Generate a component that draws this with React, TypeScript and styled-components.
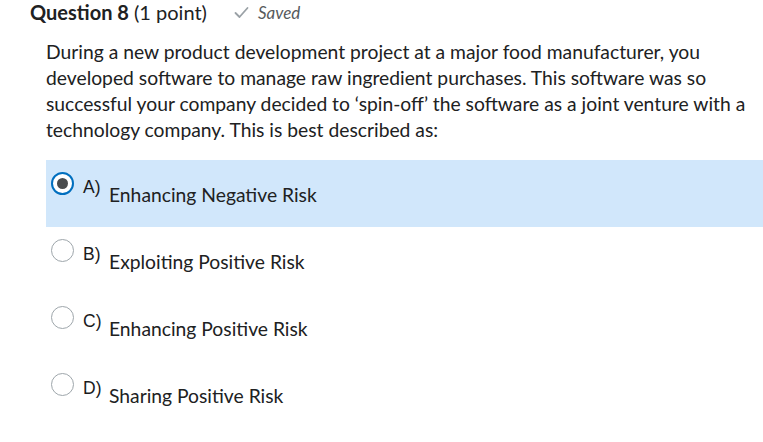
import styled, { createGlobalStyle } from "styled-components";

const GlobalStyle = createGlobalStyle`
  html, body {
    margin: 0;
    padding: 0;
    background: #fff;
  }
  body {
    font-family: Lato, "Open Sans", sans-serif;
    color: #202122;
  }
`;

const Page = styled.div`
  width: 763px;
  height: 442px;
  overflow: hidden;
`;

const Header = styled.div`
  display: flex;
  align-items: center;
  padding: 0 0 0 30px;
  height: 24px;
`;

const Title = styled.h2`
  margin: 0;
  font-size: 20px;
  font-weight: 400;
  color: #202122;
`;

const Strong = styled.span`
  font-weight: 700;
`;

const Saved = styled.span`
  display: flex;
  align-items: center;
  gap: 9px;
  margin-left: 27px;
  font-size: 17px;
  font-style: italic;
  color: #565a5c;
`;

const Prompt = styled.p`
  margin: 15px 0 0 46px;
  width: 714px;
  font-size: 19.3px;
  line-height: 26px;
  color: #202122;
`;

const Options = styled.div`
  margin-top: 17px;
  margin-left: 46px;
  display: flex;
  flex-direction: column;
`;

const Option = styled.label<{ $selected?: boolean }>`
  display: flex;
  align-items: flex-start;
  height: 67px;
  padding: 12px 0 0 5px;
  box-sizing: border-box;
  background: ${p => (p.$selected ? "#d1e7fb" : "transparent")};
  cursor: pointer;
`;

const Radio = styled.span<{ $checked?: boolean }>`
  width: 23px;
  height: 23px;
  box-sizing: border-box;
  border-radius: 50%;
  background: #fff;
  border: ${p => (p.$checked ? "2.5px solid #006fbf" : "1px solid #9ea6ab")};
  display: flex;
  align-items: center;
  justify-content: center;
  flex-shrink: 0;

  &::after {
    content: "";
    display: ${p => (p.$checked ? "block" : "none")};
    width: 11px;
    height: 11px;
    border-radius: 50%;
    background: #494c4e;
  }
`;

const Letter = styled.span`
  margin-left: 9px;
  margin-top: 5px;
  font-family: "Liberation Sans", Arial, sans-serif;
  font-size: 17.5px;
  color: #1a1b1c;
  width: 26px;
`;

const Answer = styled.span`
  margin-top: 11px;
  font-size: 19.3px;
  color: #202122;
`;

const Check = () => (
  <svg width="15" height="13" viewBox="0 0 15 13">
    <path d="M1.5 7 L5.5 11 L13.5 2" fill="none" stroke="#9aa1a6" strokeWidth="1.8" strokeLinecap="round" strokeLinejoin="round" />
  </svg>
);

const answers = [
  { key: "A)", text: "Enhancing Negative Risk" },
  { key: "B)", text: "Exploiting Positive Risk" },
  { key: "C)", text: "Enhancing Positive Risk" },
  { key: "D)", text: "Sharing Positive Risk" },
];

const App = () => {
  const selected = 0;
  return (
    <Page>
      <GlobalStyle />
      <Header>
        <Title>
          <Strong>Question 8</Strong> (1 point)
        </Title>
        <Saved>
          <Check />
          Saved
        </Saved>
      </Header>
      <Prompt>
        During a new product development project at a major food manufacturer, you
        developed software to manage raw ingredient purchases. This software was so
        successful your company decided to ‘spin-off’ the software as a joint venture with a
        technology company. This is best described as:
      </Prompt>
      <Options>
        {answers.map((a, i) => (
          <Option key={a.key} $selected={i === selected}>
            <Radio $checked={i === selected} />
            <Letter>{a.key}</Letter>
            <Answer>{a.text}</Answer>
          </Option>
        ))}
      </Options>
    </Page>
  );
};

export default App;
